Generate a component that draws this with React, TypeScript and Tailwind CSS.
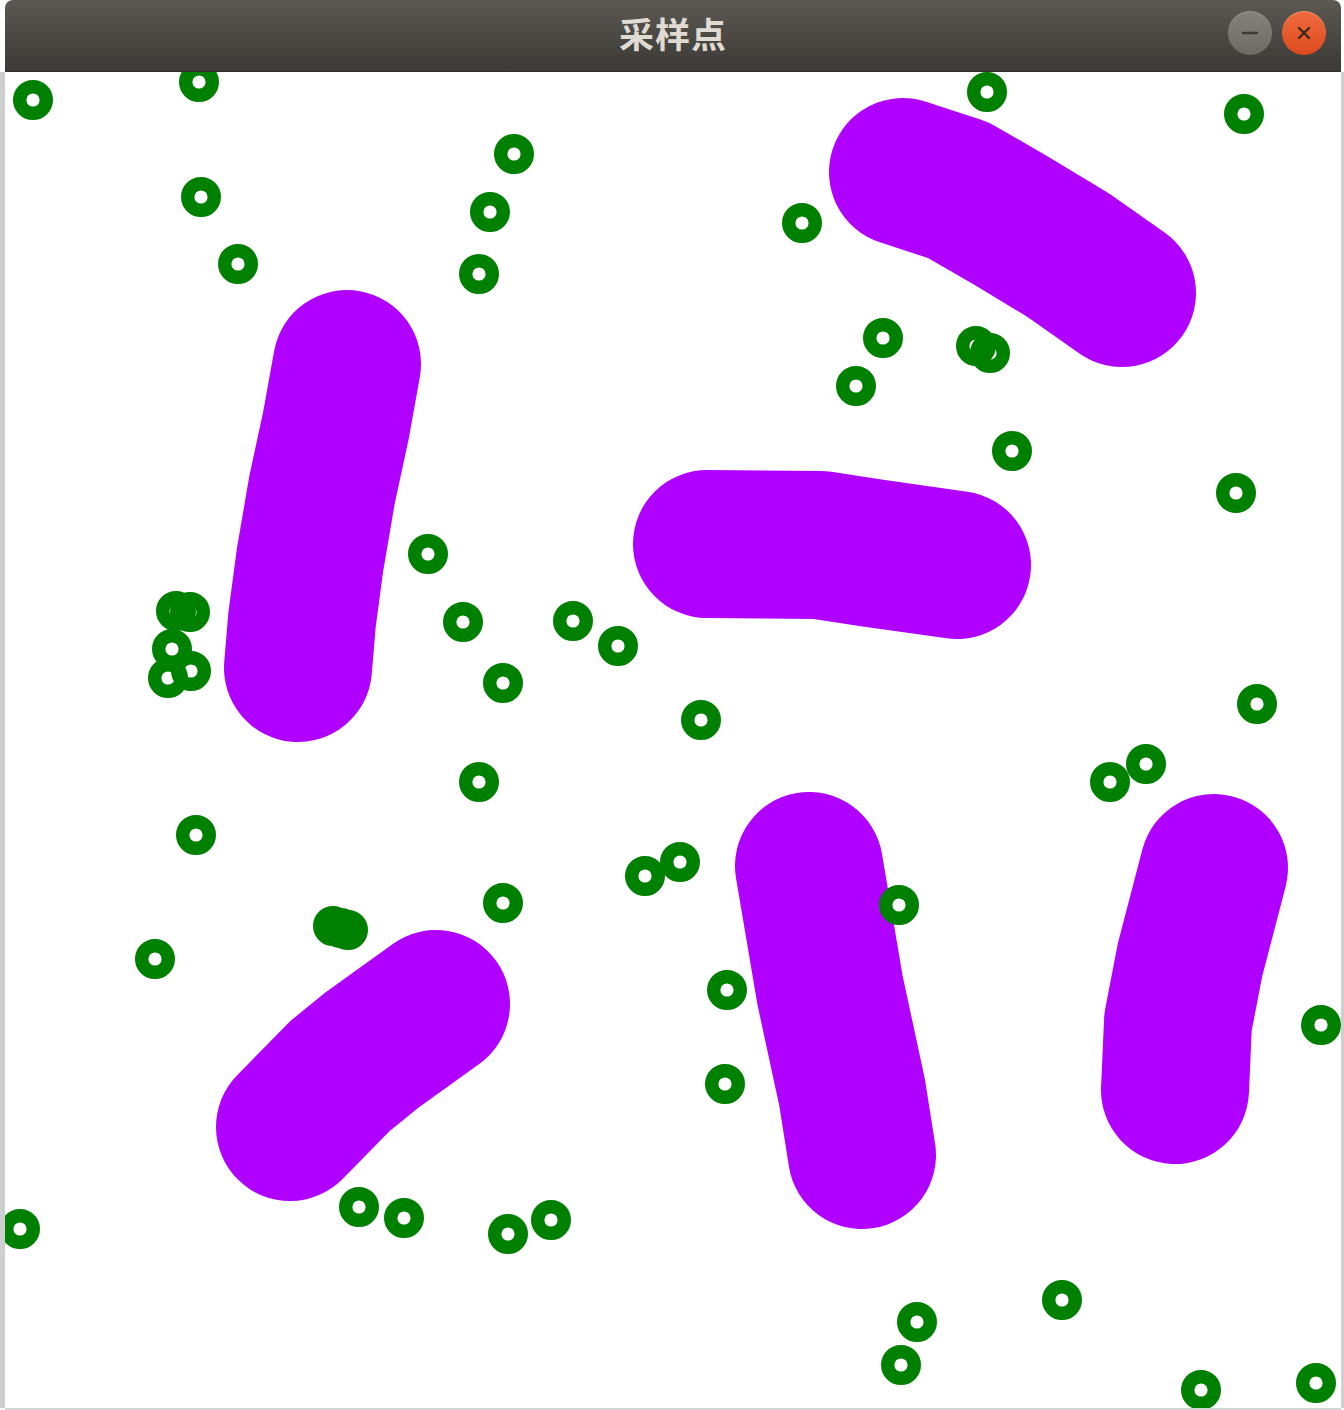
import React from 'react';

// page coordinates of the drawing area (x 5..1341, y 72..1408)
const capsules: [number, number][][] = [
  [[347, 364], [336, 425], [322, 490], [310, 560], [302, 620], [298, 668]],
  [[903, 172], [958, 190], [1010, 220], [1068, 255], [1122, 293]],
  [[707, 544], [820, 545], [872, 553], [957, 565]],
  [[436, 1004], [372, 1050], [340, 1076], [290, 1127]],
  [[809, 866], [830, 990], [852, 1092], [862, 1155]],
  [[1214, 868], [1190, 960], [1178, 1022], [1175, 1090]],
];

const rings: [number, number][] = [
  [33, 100], [199, 82], [201, 197], [238, 264], [514, 154], [490, 212], [479, 274],
  [987, 92], [1244, 114], [802, 223], [883, 338], [856, 386], [976, 346], [990, 353],
  [1012, 451], [1236, 493], [428, 554], [463, 622], [573, 621], [618, 646], [503, 683],
  [701, 720], [1257, 704], [1110, 782], [1146, 764], [479, 782], [196, 835], [503, 903],
  [645, 876], [680, 862], [899, 905], [155, 959], [333, 926], [341, 928], [348, 930],
  [727, 990], [725, 1084], [20, 1229], [359, 1207], [404, 1218], [508, 1234], [551, 1220],
  [1321, 1025], [1062, 1300], [917, 1322], [901, 1365], [1201, 1390], [1316, 1383],
  [176, 611], [190, 612], [172, 649], [168, 678], [191, 671],
];

const WindowButton = ({ kind }: { kind: 'min' | 'close' }) => (
  <div
    className={
      kind === 'close'
        ? 'w-[44px] h-[44px] rounded-full bg-gradient-to-b from-[#f06a3c] to-[#dc4a1f] flex items-center justify-center shadow-[inset_0_1px_0_rgba(255,255,255,0.25)]'
        : 'w-[44px] h-[44px] rounded-full bg-gradient-to-b from-[#86837d] to-[#6d6a65] flex items-center justify-center shadow-[inset_0_1px_0_rgba(255,255,255,0.15)]'
    }
  >
    <svg width="20" height="20" viewBox="0 0 20 20">
      {kind === 'close' ? (
        <path d="M5 5 L15 15 M15 5 L5 15" stroke="#3a2a20" strokeWidth="2.4" strokeLinecap="round" />
      ) : (
        <path d="M3 10 H17" stroke="#3c3b37" strokeWidth="2.4" strokeLinecap="round" />
      )}
    </svg>
  </div>
);

const App = () => {
  return (
    <div className="w-[1344px] h-[1410px] bg-white flex flex-col overflow-hidden">
      <div className="h-[72px] ml-[5px] mr-[3px] rounded-t-[8px] bg-gradient-to-b from-[#5c5953] to-[#3c3a36] grid grid-cols-[1fr_auto_1fr] items-center border-b border-[#2f2e2b] pb-[6px]">
        <div />
        <div
          className="text-[35px] font-bold text-[#dfdbd2] leading-none tracking-[1px]"
          style={{ fontFamily: '"Noto Sans CJK SC", "Noto Sans", sans-serif' }}
        >
          采样点
        </div>
        <div className="flex justify-end items-center gap-[10px] pr-[15px]">
          <WindowButton kind="min" />
          <WindowButton kind="close" />
        </div>
      </div>
      <div className="flex h-[1336px]">
        <div className="w-[5px] bg-[#cfcfcf]" />
        <svg width="1336" height="1336" viewBox="5 72 1336 1336" className="block bg-white">
          {capsules.map((pts, i) => (
            <polyline
              key={i}
              points={pts.map((p) => p.join(',')).join(' ')}
              fill="none"
              stroke="#b000ff"
              strokeWidth="148"
              strokeLinecap="round"
              strokeLinejoin="round"
            />
          ))}
          {rings.map(([x, y], i) => (
            <circle key={i} cx={x} cy={y} r="13.3" fill="none" stroke="#008000" strokeWidth="13.4" />
          ))}
        </svg>
        <div className="w-[3px] bg-[#cfcfcf]" />
      </div>
      <div className="h-[2px] ml-[5px] mr-[3px] bg-[#d6d6d6]" />
    </div>
  );
};

export default App;
